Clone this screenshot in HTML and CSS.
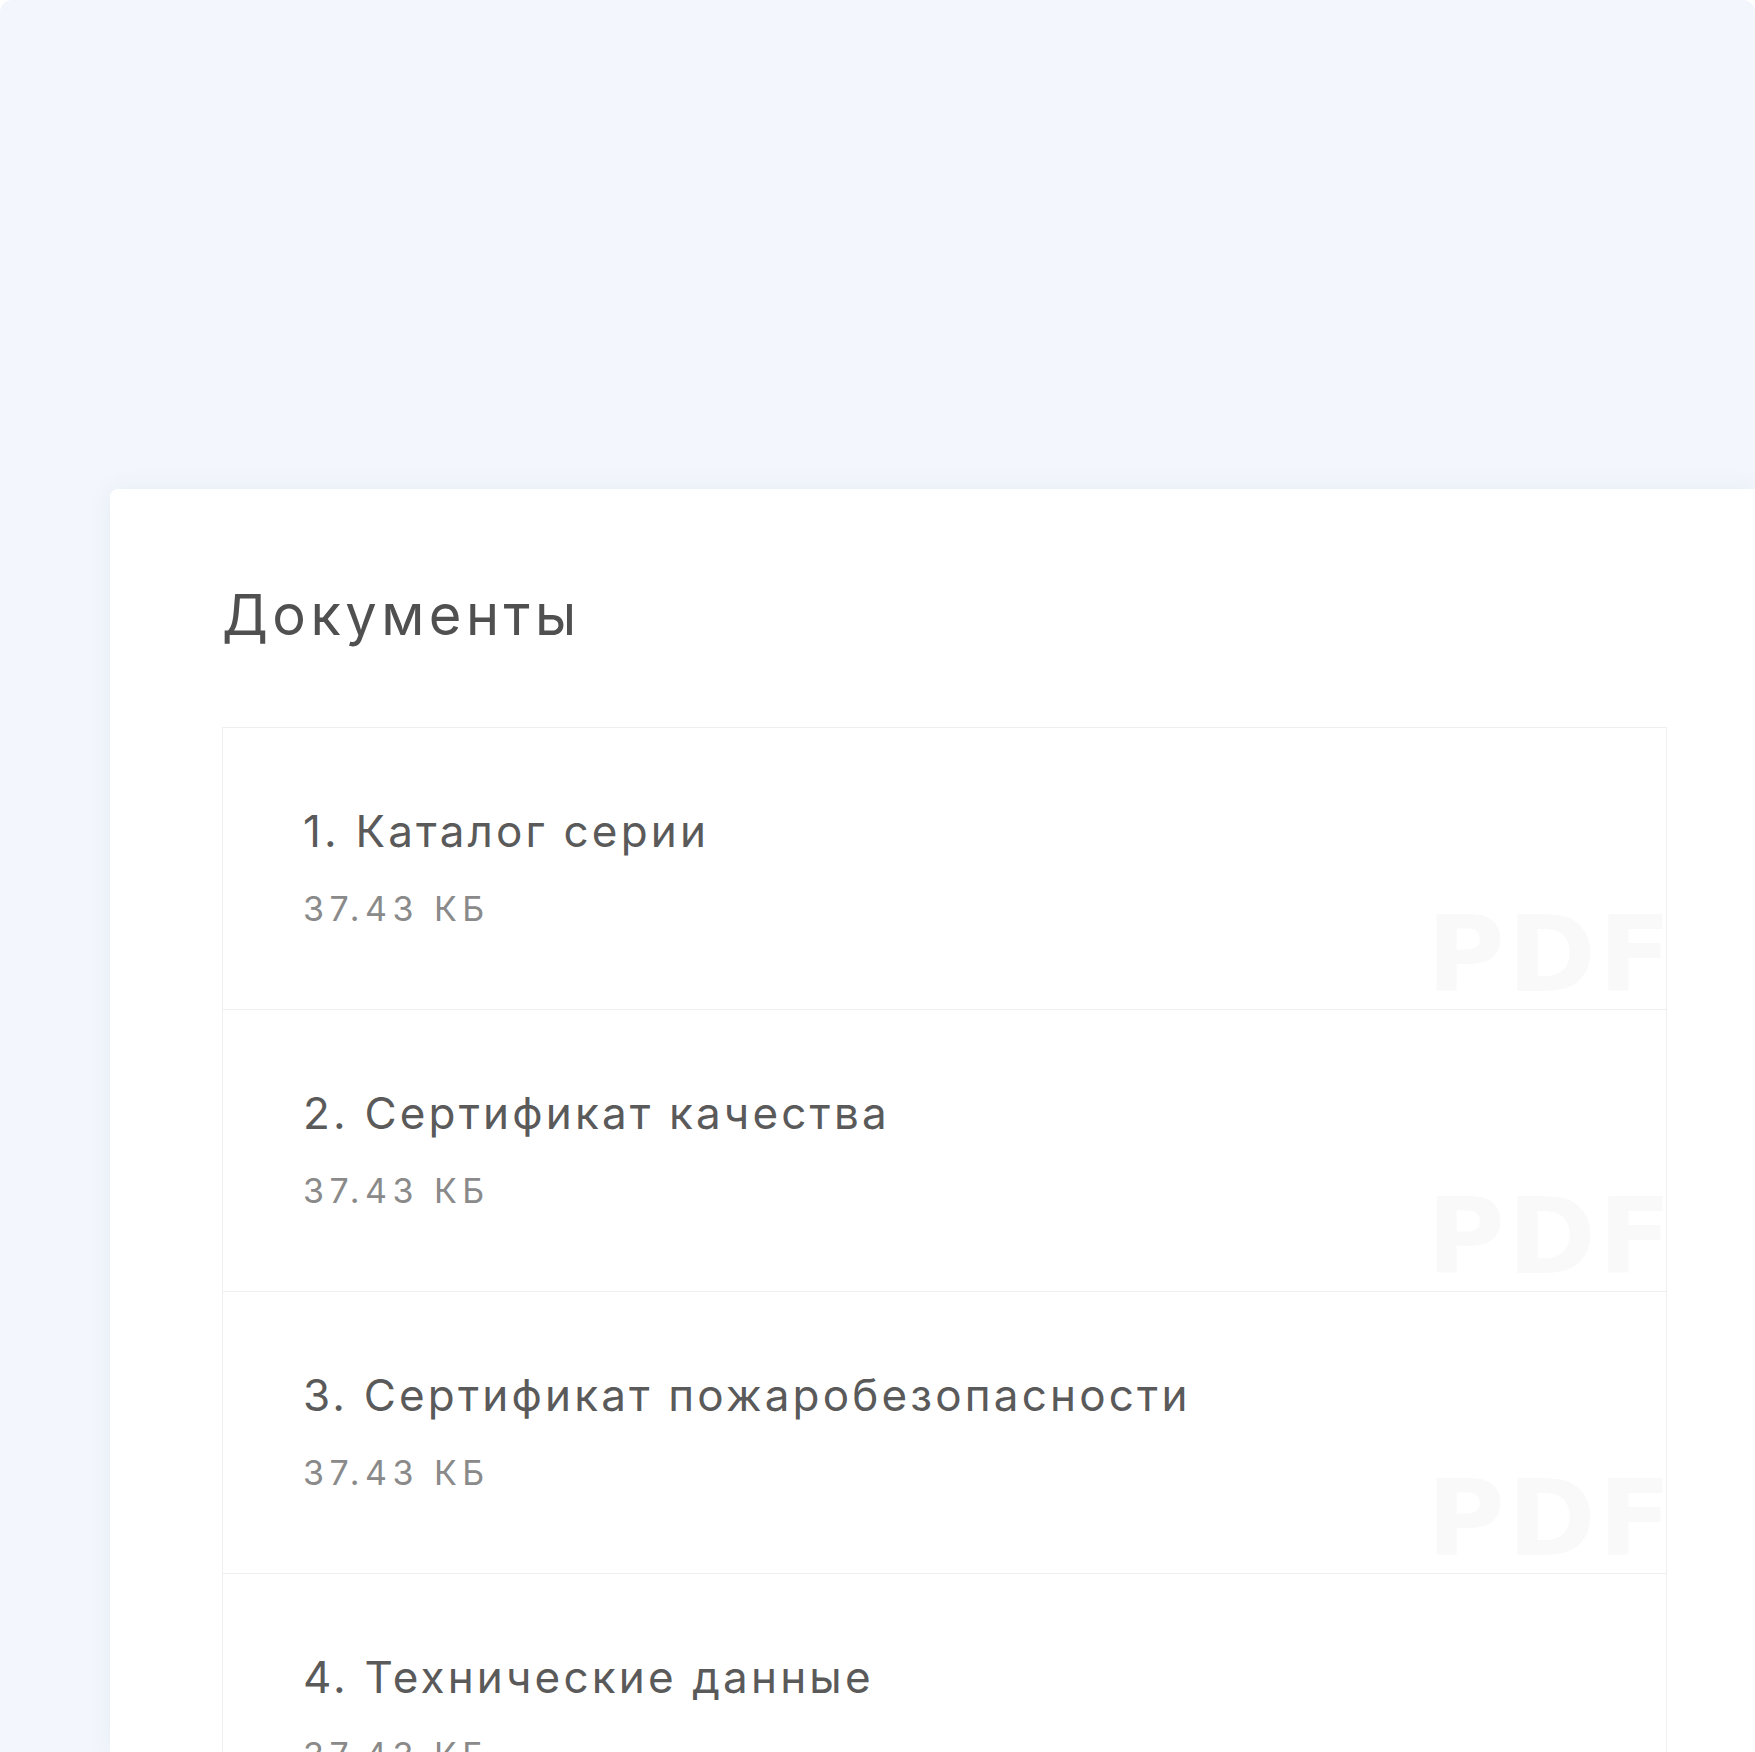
FILE: index.html
```html
<!DOCTYPE html>
<html lang="ru">
<head>
<meta charset="utf-8">
<title>Документы</title>
<link rel="stylesheet" href="styles.css">
</head>
<body>
<div class="panel">
  <section class="card">
    <h2 class="card-title">Документы</h2>
    <ul class="doc-list">
      <li class="doc">
        <div class="doc-name">1. Каталог серии</div>
        <div class="doc-size">37.43 КБ</div>
        <span class="doc-mark">PDF</span>
      </li>
      <li class="doc">
        <div class="doc-name">2. Сертификат качества</div>
        <div class="doc-size">37.43 КБ</div>
        <span class="doc-mark">PDF</span>
      </li>
      <li class="doc">
        <div class="doc-name">3. Сертификат пожаробезопасности</div>
        <div class="doc-size">37.43 КБ</div>
        <span class="doc-mark">PDF</span>
      </li>
      <li class="doc">
        <div class="doc-name">4. Технические данные</div>
        <div class="doc-size">37.43 КБ</div>
        <span class="doc-mark">PDF</span>
      </li>
    </ul>
  </section>
</div>
</body>
</html>
```

FILE: styles.css
```css
html, body {
  margin: 0;
  height: 100%;
  overflow: hidden;
  background: #ffffff;
}

body {
  font-family: Inter, "Noto Sans", "DejaVu Sans", sans-serif;
}

.panel {
  box-sizing: border-box;
  height: 1752px;
  background: #f3f7fd;
  border-radius: 12px 12px 0 0;
  padding: 489px 0 0 110px;
}

.card {
  box-sizing: border-box;
  height: 100%;
  background: #ffffff;
  border-radius: 8px 0 0 0;
  box-shadow: 0 0 26px rgba(40, 50, 70, 0.06);
  padding: 98px 0 0 112px;
}

.card-title {
  margin: 0 0 84px;
  font-size: 56px;
  line-height: 56px;
  font-weight: 400;
  color: #505050;
  letter-spacing: 0.08em;
}

.doc-list {
  box-sizing: border-box;
  width: 1445px;
  margin: 0;
  padding: 0;
  list-style: none;
  border: 1px solid #efefef;
  border-bottom: none;
}

.doc {
  position: relative;
  box-sizing: border-box;
  height: 282px;
  border-bottom: 1px solid #efefef;
  overflow: hidden;
  display: flex;
  flex-direction: column;
  justify-content: center;
  gap: 31px;
  padding-left: 80px;
}

.doc-name {
  font-size: 44px;
  line-height: 50px;
  color: #5a5a5a;
  letter-spacing: 0.072em;
}

.doc-size {
  font-size: 34px;
  line-height: 44px;
  color: #8a8a8a;
  letter-spacing: 0.16em;
}

.doc-mark {
  position: absolute;
  left: 1204px;
  top: 174px;
  font-family: "DejaVu Sans", sans-serif;
  font-size: 106px;
  line-height: 106px;
  font-weight: 700;
  color: #f9f9f9;
  letter-spacing: 3px;
}
```
